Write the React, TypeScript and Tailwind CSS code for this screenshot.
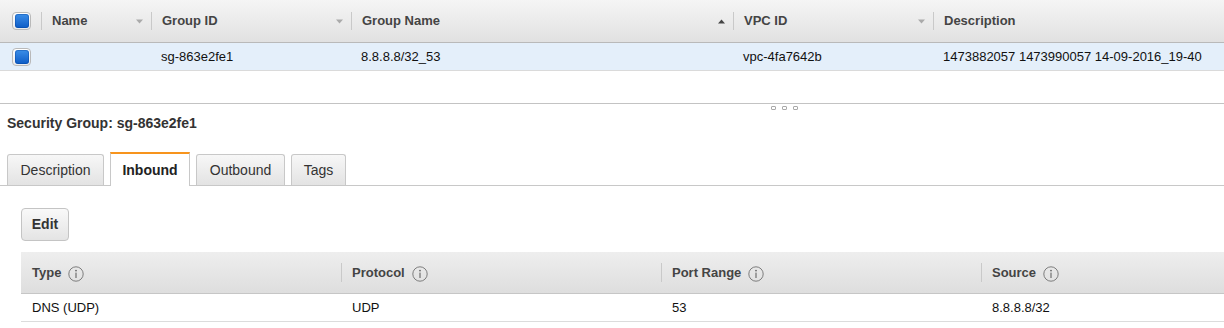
import React from 'react';

const font = { fontFamily: '"Liberation Sans", Arial, Helvetica, sans-serif' };

function Checkbox() {
  return (
    <span className="flex h-[18px] w-[19px] items-center justify-center rounded-[4px] border border-[#b9b9b9] bg-gradient-to-b from-white to-[#ececec]">
      <span className="h-[14px] w-[14px] rounded-[3px] bg-gradient-to-b from-[#3b8ee8] to-[#0b5cc6] shadow-[inset_0_0_0_1px_rgba(0,60,150,0.35)]" />
    </span>
  );
}

function Arrow({ up }: { up?: boolean }) {
  return up ? (
    <svg width="7" height="5" viewBox="0 0 7 5" className="mr-[8px]">
      <path d="M0 4.5 L3.5 0.5 L7 4.5 Z" fill="#444" />
    </svg>
  ) : (
    <svg width="7" height="5" viewBox="0 0 7 5" className="mr-[8px]">
      <path d="M0 0.5 L3.5 4.5 L7 0.5 Z" fill="#aaa" />
    </svg>
  );
}

function Info() {
  return (
    <svg width="16" height="16" viewBox="0 0 16 16" className="ml-[7px] mt-[2px]">
      <circle cx="8" cy="8" r="7.2" fill="none" stroke="#7d7d7d" strokeWidth="1" />
      <circle cx="8" cy="4.6" r="0.9" fill="#666" />
      <rect x="7.45" y="6.6" width="1.1" height="5.4" fill="#666" />
    </svg>
  );
}

const topCols = [
  { label: 'Name', w: 'w-[110px]', value: '' },
  { label: 'Group ID', w: 'w-[200px]', value: 'sg-863e2fe1' },
  { label: 'Group Name', w: 'w-[382px]', value: '8.8.8.8/32_53', up: true },
  { label: 'VPC ID', w: 'w-[200px]', value: 'vpc-4fa7642b' },
  { label: 'Description', w: 'flex-1', value: '1473882057 1473990057 14-09-2016_19-40', noArrow: true },
];

const ruleCols = [
  { label: 'Type', value: 'DNS (UDP)' },
  { label: 'Protocol', value: 'UDP' },
  { label: 'Port Range', value: '53' },
  { label: 'Source', value: '8.8.8.8/32' },
];

const tabs = [
  { label: 'Description', w: 'w-[97px]' },
  { label: 'Inbound', w: 'w-[80px]' },
  { label: 'Outbound', w: 'w-[89px]' },
  { label: 'Tags', w: 'w-[55px]' },
];

export default function App() {
  return (
    <div className="h-[328px] w-[1224px] overflow-hidden bg-white text-[13px] text-[#111]" style={font}>
      {/* list of security groups */}
      <div className="relative h-[104px] border-b border-[#c3c3c3]">
        <div className="flex h-[43px] items-center border-b border-[#b9b9b9] bg-gradient-to-b from-[#f5f5f5] to-[#e1e1e1]">
          <div className="flex w-[41px] pl-[12px]">
            <Checkbox />
          </div>
          {topCols.map((c) => (
            <div key={c.label} className={`flex h-full items-center ${c.w}`}>
              <span className="h-[18px] w-px bg-[#c9c9c9]" />
              <span className="ml-[10px] flex-1 font-bold text-[#444]">{c.label}</span>
              {!c.noArrow && <Arrow up={c.up} />}
            </div>
          ))}
        </div>
        <div className="flex h-[28px] items-center border-b border-[#dadada] bg-[#e4effa]">
          <div className="flex w-[41px] pl-[12px]">
            <Checkbox />
          </div>
          {topCols.map((c) => (
            <div key={c.label} className={`pl-[10px] ${c.w}`}>
              {c.value}
            </div>
          ))}
        </div>
        <div className="absolute left-[771px] top-[106px] z-10 flex gap-[6px]">
          <span className="h-[4px] w-[5px] rounded-[1px] border border-[#a9a9a9]" />
          <span className="h-[4px] w-[5px] rounded-[1px] border border-[#a9a9a9]" />
          <span className="h-[4px] w-[5px] rounded-[1px] border border-[#a9a9a9]" />
        </div>
      </div>

      {/* details */}
      <div className="pl-[7px] pt-[9px] text-[14px] font-bold leading-[20px] text-[#333]">
        Security Group: sg-863e2fe1
      </div>

      <div className="mt-[19px] flex items-end gap-[6px] border-b border-[#c8c8c8] pl-[7px]">
        {tabs.map((t) =>
          t.label === 'Inbound' ? (
            <div
              key={t.label}
              className={`relative -mb-px flex h-[34px] items-center justify-center border-x border-t-2 border-x-[#c8c8c8] border-t-[#f7941d] bg-white text-[14px] font-bold text-[#222] ${t.w}`}
            >
              {t.label}
            </div>
          ) : (
            <div
              key={t.label}
              className={`flex h-[31px] items-center justify-center rounded-t-[3px] border-x border-t border-[#c8c8c8] bg-gradient-to-b from-[#f7f7f7] to-[#e3e3e3] text-[14px] text-[#333] ${t.w}`}
            >
              {t.label}
            </div>
          )
        )}
      </div>

      <div className="ml-[21px] mt-[22px]">
        <button className="h-[33px] w-[48px] rounded-[4px] border border-[#c4c4c4] bg-gradient-to-b from-[#f9f9f9] to-[#e4e4e4] text-[14px] font-bold text-[#333]">
          Edit
        </button>
      </div>

      <div className="ml-[21px] mt-[11px] w-[1280px]">
        <div className="flex h-[42px] items-center border-b border-[#c6c6c6] bg-gradient-to-b from-[#eeeeee] to-[#dedede]">
          {ruleCols.map((c, i) => (
            <div key={c.label} className="flex h-full w-[320px] items-center">
              {i > 0 && <span className="h-[19px] w-px bg-[#c9c9c9]" />}
              <span className={`font-bold text-[#444] ${i > 0 ? 'ml-[10px]' : 'ml-[11px]'}`}>{c.label}</span>
              <Info />
            </div>
          ))}
        </div>
        <div className="flex h-[28px] items-center border-b border-[#dcdcdc]">
          {ruleCols.map((c) => (
            <div key={c.label} className="w-[320px] pl-[11px]">
              {c.value}
            </div>
          ))}
        </div>
      </div>
    </div>
  );
}
